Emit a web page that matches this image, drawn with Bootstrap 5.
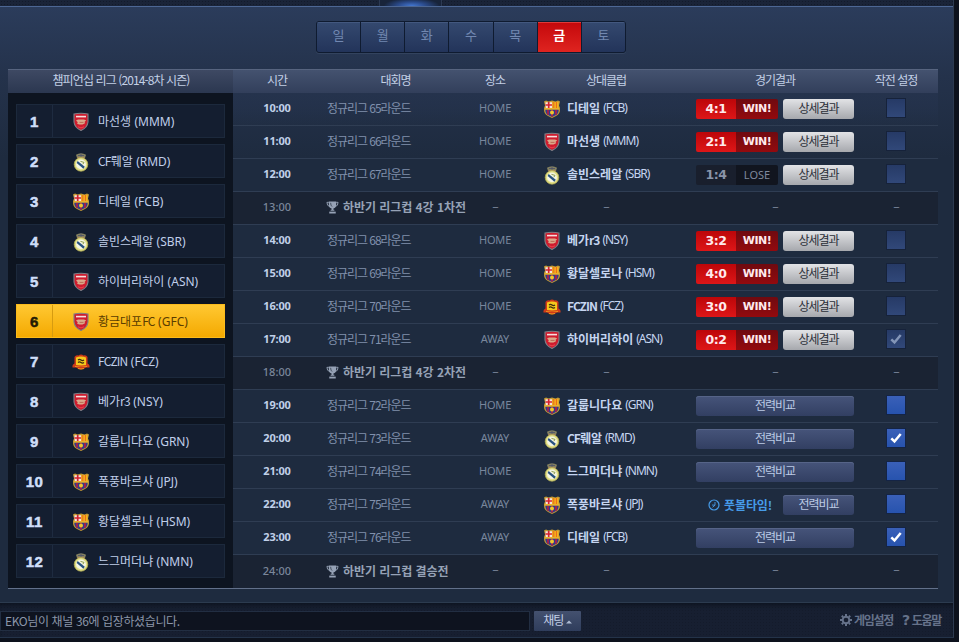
<!DOCTYPE html>
<html lang="ko">
<head>
<meta charset="utf-8">
<meta name="viewport" content="width=device-width, initial-scale=1">
<title>경기 일정</title>
<link href="https://cdn.jsdelivr.net/npm/bootstrap@5.3.0/dist/css/bootstrap.min.css" rel="stylesheet">
<style>
body{font-family:"Noto Sans CJK KR",sans-serif;font-size:12px;line-height:16px;letter-spacing:-1px;color:#b9c9e4;background:#0d121d;height:642px;overflow:hidden}
.en{font-family:"Noto Sans","Noto Sans CJK KR",sans-serif}
.lat{letter-spacing:-.8px}
.shell{width:954px;height:638px;border-right:1px solid #2c3a50;border-bottom:1px solid #243349}
.topstrip{height:7px;border-bottom:1px solid #4d6794;background:#1a2438 radial-gradient(#131b2b 35%,transparent 40%) 0 0/3px 3px}
.glow{width:63px;height:6px;margin-left:379px;border:solid #2c3a53;border-width:0 1px;background:radial-gradient(ellipse 28px 8px at 52% 100%,#4478d2,#2a4a8a 50%,#18243a)}
.board{height:596px;background:linear-gradient(#2b3c5b,#24324b 70px,#1e2b3f 150px);border-bottom:1px solid #2c3b4f;padding:14px 15px 0 8px}
.days{width:310px;height:32px;margin-left:308px;border:1px solid #0f1b30;border-radius:3px;background:#0f1b30;gap:1px;overflow:hidden;box-shadow:0 1px 0 #33435e}
.day{flex:1 1 0;border:0;border-radius:0;padding:0 0 4px;color:#7288b1;font-size:13px;line-height:26px;letter-spacing:0;background:linear-gradient(#34496f,#23345a);box-shadow:inset 0 1px #43587f}
.day.on{color:#fff;font-weight:700;background:linear-gradient(#c4080b,#df2420);box-shadow:inset 0 1px #df3a38}
.sheet{margin-top:16px;width:930px;height:520px;border-bottom:1px solid #62708a}
.bar{height:24px;background:linear-gradient(#44526f,#323f5b);border-top:1px solid #57647f;color:#c3d0e6;padding-bottom:3px}
.side{width:225px;background:#0d1420}
.side .bar{letter-spacing:-.9px;padding-left:1px;background:linear-gradient(#3e4963,#2b3750)}
.ranks{padding:11px 8px 0;gap:6px}
.club{height:34px;background:#141e30;border:1px solid #1c293c;letter-spacing:0;color:#c0cfea}
.club .no{width:36px;height:32px;border-right:1px solid #1e2b40;font:700 15px/33px "Liberation Sans",sans-serif;letter-spacing:.5px;-webkit-text-stroke:.5px currentColor;color:#cfdef8}
.club .crest{margin-left:19px;margin-top:2px}
.club .nm{margin-left:8px;padding-top:1px}
.club.mine{background:linear-gradient(#ffc832,#f4a900);border-color:#fbbb1c;color:#5a3c00}
.club.mine .no{color:#241a04;border-color:#d69b10}
.crest{width:18px;height:20px;flex:none}
.fixtures{width:705px}
.line{display:grid;grid-template-columns:84px 153px 46px 176px 162px 80px;padding-left:2px;align-items:center}
.game{height:33px;border-bottom:1px solid #2f3d53}
.game:last-child{border-bottom:0}
.game:nth-child(2){background:linear-gradient(#25334d,transparent)}
.game.cup{background:#1a2333;color:#8591a6}
.time{font-size:11px;font-weight:700;letter-spacing:-.15px;color:#c0d0e8}
.cup .time{font-weight:500;color:#7b879b;letter-spacing:.05px}
.league{padding-left:8px;color:#8090ac;letter-spacing:-1.05px}
.cup .league{font-weight:700;letter-spacing:-.05px;color:#96a2b6;padding-left:7px}
.place{font-size:11px;letter-spacing:-.15px;color:#78869c}
.rival{padding-left:25px;color:#c5d5f0}
.rival .crest{margin-right:6px;margin-top:1px}
.rival b{letter-spacing:0;margin-right:3px}
.rival .lat{letter-spacing:-1px}
.game>*{margin-bottom:2px}
.game>.dash{margin-bottom:5px}
.game>.res{margin-bottom:0}
.game>.tac{margin-bottom:2px}
.res{padding:0 2px}
.score,.verdict{height:20px;line-height:19px;font-family:"DejaVu Sans",sans-serif;font-weight:700;letter-spacing:-.5px;color:#ffe9ec}
.score{width:40px;font-size:12.500px;background:linear-gradient(#bd0609,#dd1618);border-radius:2px 0 0 2px}
.verdict{width:42px;font-size:11px;background:linear-gradient(#6f0a10,#930a0e);border-radius:0 2px 2px 0}
.lost .score{background:#191f2d;color:#8a94a8}
.lost .verdict{background:#11151f;color:#7f899c;font-family:"Noto Sans",sans-serif;font-weight:400;font-size:11px;letter-spacing:0}
.act{height:20px;line-height:15px;padding:0 0 4px;border:0;border-radius:3px;font-size:12px;letter-spacing:-1px;color:#bccbe6;background:linear-gradient(#46547a,#323f62);box-shadow:inset 0 1px #566488}
.act.half{width:71px}
.act.done{color:#2b2f38;background:linear-gradient(#e2e3e6,#a6a8ad);box-shadow:none}
.live{color:#469be8;font-weight:700;letter-spacing:-.1px}
.tick{width:20px;height:20px;border:1px solid #16223a;background:linear-gradient(#263a66,#314879);color:#8496b8}
.tick.open{background:linear-gradient(#3a60b8,#2753ae);border-color:#142445;color:#fff}
.foot{height:34px;background:#171f31 radial-gradient(#141b2b 30%,transparent 45%) 0 0/3px 3px;box-shadow:inset 0 4px 4px -2px #0d131f}
.msg{width:530px;height:20px;margin-top:2px;background:#0e131f;border:1px solid #222e42;color:#8c96a9;padding:0 4px;line-height:17px;letter-spacing:-.38px}
.chat{width:47px;height:20px;margin:2px 0 0 4px;border:0;border-radius:1px;padding:0 0 2px;line-height:16px;font-size:12px;letter-spacing:-1px;color:#c3cfe8;background:linear-gradient(#44516f,#2f3d5c)}
.tools{color:#66728a;font-weight:700;letter-spacing:-1.3px;font-size:12px;margin-right:12px}
.tool-a{margin-right:9px;margin-left:-2px}
.tool-q{font:700 14px/16px "DejaVu Sans",sans-serif;margin-right:3px}
</style>
<script src="https://cdn.jsdelivr.net/npm/bootstrap@5.3.0/dist/js/bootstrap.bundle.min.js"></script>
</head>
<body>
<svg width="0" height="0" class="d-none">
  <symbol id="ars" viewBox="0 0 18 20"><path d="M2 2Q9 .5 16 2V10Q15.500 15.500 9 18.500Q2.500 15.500 2 10Z" fill="#cf1c2e" stroke="#7d8188" stroke-width="1.100"/><path d="M4 4.600h10" stroke="#f7dede" stroke-width="1.600"/><path d="M4 8.500l2-1h6l2.200 1-1.600 1.200.4 1.500-2.500 1.300H7L5 11.500l.8-1.200z" fill="#dba98a"/><path d="M7.500 10.400h4" stroke="#b55a48" stroke-width=".8"/><path d="M6 14.800q3 2.200 6 0" stroke="#ea4450" fill="none"/></symbol>
  <symbol id="rma" viewBox="0 0 18 20"><path d="M5 6L4 2.800Q9-.5 14 2.800L13 6Z" fill="#858260"/><path d="M6 3.500h6M9 1.200v3.500" stroke="#50556a" stroke-width=".9"/><path d="M5.500 5.600h7" stroke="#b4735a" stroke-width=".9"/><circle cx="9" cy="12.400" r="6.800" fill="#e2df86" stroke="#a9a650" stroke-width=".8"/><circle cx="9" cy="12.400" r="4.900" fill="#f4f5e4"/><path d="M5.600 9l7.200 5.800-1.400 1.900L4.700 11z" fill="#285280"/><path d="M8.500 9.400l3.500 1-1.200 1.800" stroke="#8a9a48" fill="none"/></symbol>
  <symbol id="bar" viewBox="0 0 18 20"><path d="M1 2.500L3 1.500 5.500 2.500 9 1.500 12.500 2.500 15 1.500 17 2.500 16 6.500 17 9Q17.500 15 13 17L9 19 5 17Q.5 15 1 9L2 6.500Z" fill="#c49a34"/><path d="M2.500 3.300H9V9H2.800Z" fill="#f5e3dc"/><path d="M5.700 3v6M2.500 6H9" stroke="#d5222f" stroke-width="1.700"/><path d="M9.300 3h6.200v6H9.300z" fill="#f6b21c"/><path d="M10.800 3v6M13.400 3v6" stroke="#e8661e" stroke-width="1"/><path d="M2 9h14v1.800H2z" fill="#eab12c"/><path d="M2.300 10.800h13.400Q15.600 15 12.500 16.300L9 18 5.500 16.300Q2.400 15 2.300 10.800" fill="#303c8a"/><path d="M5 11v4.800M13 11v4.800M9 11v6.500" stroke="#b01d45" stroke-width="1.700"/><circle cx="9" cy="13.600" r="2" fill="#eec62e"/></symbol>
  <symbol id="fcz" viewBox="0 0 18 20"><path d="M2.500 5Q4 2.500 6.500 3.500Q9 1.300 11.500 3.500Q14 2.500 15.500 5L15.500 11.500Q18 12.500 17.500 15.500L14 15.500Q9 19.500 4 15.500L.5 15.500Q0 12.500 2.500 11.500Z" fill="#cf3a18"/><path d="M4 5.500Q9 3.300 14 5.500V13H4Z" fill="#f5c81c"/><path d="M6 8q1.500-1.200 3 0t3 0M6 10.500q1.500-1.200 3 0t3 0" stroke="#3a2c10" fill="none" stroke-width="1.200"/><path d="M3 14.500Q9 13 15 14.500M6 16.500q3 1 6 0" stroke="#f0a01a" fill="none" stroke-width=".9"/></symbol>
  <symbol id="cup" viewBox="0 0 14 14"><path d="M3 1h8v3q0 4-3 4.500V10h1v1H5v-1h1V8.500Q3 8 3 4Z" fill="currentColor"/><path d="M3 2H1q0 4 3 4.500M11 2h2q0 4-3 4.500" fill="none" stroke="currentColor"/><path d="M3.500 12h7v2h-7z" fill="currentColor"/><path d="M5 2.500q0 3 1.500 4" stroke="#333d4d" fill="none" stroke-width=".9"/></symbol>
  <symbol id="chk" viewBox="0 0 12 12"><path d="M1.300 6.300L4.500 9.500 10.700 2" fill="none" stroke="currentColor" stroke-width="2.500"/></symbol>
  <symbol id="clock" viewBox="0 0 12 12"><circle cx="6" cy="6" r="5" fill="none" stroke="currentColor" stroke-width="1.200"/><path d="M7 3v3.200L4.500 8.300M7 6.200L4 6" fill="none" stroke="currentColor" stroke-width=".9"/></symbol>
  <symbol id="gear" viewBox="0 0 12 12"><circle cx="6" cy="6" r="3.300" fill="none" stroke="currentColor" stroke-width="1.900"/><path d="M6 0v2M6 10v2M0 6h2M10 6h2M1.800 1.800l1.400 1.400M8.800 8.800l1.400 1.400M10.200 1.800L8.800 3.200M3.200 8.800L1.800 10.200" stroke="currentColor" stroke-width="2"/></symbol>
</svg>

<div class="shell">
  <div class="topstrip"><div class="glow"></div></div>
  <main class="board">
    <div class="days d-flex" role="group">
      <button class="btn day">일</button><button class="btn day">월</button><button class="btn day">화</button><button class="btn day">수</button><button class="btn day">목</button><button class="btn day on">금</button><button class="btn day">토</button>
    </div>
    <div class="sheet d-flex">
      <aside class="side">
        <div class="bar d-flex align-items-center justify-content-center">챔피언십 리그 (2014-8차 시즌)</div>
        <div class="ranks d-flex flex-column" id="ranks"></div>
      </aside>
      <section class="fixtures" id="fixtures">
        <div class="bar line text-center"><span>시간</span><span>대회명</span><span>장소</span><span>상대클럽</span><span>경기결과</span><span>작전 설정</span></div>
      </section>
    </div>
  </main>
  <footer class="foot d-flex align-items-center">
    <div class="msg">EKO님이 채널 36에 입장하셨습니다.</div>
    <button class="btn chat">채팅 <svg width="6" height="4"><path d="M0 3.500L3 .5 6 3.500Z" fill="#aebbd3"/></svg></button>
    <div class="tools d-flex align-items-center ms-auto">
      <svg width="12" height="12" class="me-1"><use href="#gear"/></svg><span class="tool-a">게임설정</span>
      <span class="tool-q">?</span><span>도움말</span>
    </div>
  </footer>
</div>

<script>
const clubs = {
  MMM:['마선생','ars'], RMD:['CF뤠알','rma'], FCB:['디테일','bar'], SBR:['솔빈스레알','rma'],
  ASN:['하이버리하이','ars'], GFC:['황금대포FC','ars'], FCZ:['FCZIN','fcz'], NSY:['베가r3','ars'],
  GRN:['갈룹니다요','bar'], JPJ:['폭풍바르샤','bar'], HSM:['황달셀로나','bar'], NMN:['느그머더냐','rma']
};
const icon = (id, cls, w, h) => `<svg class="${cls}" width="${w}" height="${h}"><use href="#${id}"/></svg>`;
// Latin runs inside a club name are set tighter than the Hangul
const tight = name => name.replace(/[A-Za-z0-9]+/g, '<span class="lat">$&</span>');

document.getElementById('ranks').innerHTML = Object.entries(clubs).map(([code, [name, crest]], i) => `
  <div class="club d-flex align-items-center${code === 'GFC' ? ' mine' : ''}">
    <span class="no text-center">${i + 1}</span>${icon(crest, 'crest', 18, 20)}
    <span class="nm text-nowrap">${tight(name)} <span class="en">(${code})</span></span>
  </div>`).join('');

// [round, place, club, score or null, checked, live] ; a string is a cup match
const games = [
  [65,'HOME','FCB','4:1'], [66,'HOME','MMM','2:1'], [67,'HOME','SBR','1:4'], '하반기 리그컵 4강 1차전',
  [68,'HOME','NSY','3:2'], [69,'HOME','HSM','4:0'], [70,'HOME','FCZ','3:0'], [71,'AWAY','ASN','0:2',true],
  '하반기 리그컵 4강 2차전', [72,'HOME','GRN',null], [73,'AWAY','RMD',null,true], [74,'HOME','NMN',null],
  [75,'AWAY','JPJ',null,false,true], [76,'AWAY','FCB',null,true], '하반기 리그컵 결승전'
];
const result = (score, live) => {
  if (score) {
    const lost = score === '1:4';
    return `<div class="d-flex${lost ? ' lost' : ''}"><span class="score text-center">${score}</span><span class="verdict text-center">${lost ? 'LOSE' : 'WIN!'}</span></div>
      <button class="btn act half done">상세결과</button>`;
  }
  if (live) return `<span class="live d-flex align-items-center ms-2 ps-1">${icon('clock', 'me-1', 12, 12)}풋볼타임!</span><button class="btn act half">전력비교</button>`;
  return '<button class="btn act w-100">전력비교</button>';
};
document.getElementById('fixtures').insertAdjacentHTML('beforeend', games.map((g, i) => {
  const time = `<span class="time en text-center">${i + 10}:00</span>`;
  if (typeof g === 'string') return `<div class="game line cup">${time}
    <span class="league text-nowrap d-flex align-items-center">${icon('cup', 'me-1', 13, 14)}<span>${g}</span></span>
    ${'<span class="dash text-center">–</span>'.repeat(4)}</div>`;
  const [round, place, code, score, checked, live] = g, [name, crest] = clubs[code];
  return `<div class="game line">${time}<span class="league">정규리그 ${round}라운드</span>
    <span class="place en text-center">${place}</span>
    <span class="rival d-flex align-items-center text-nowrap">${icon(crest, 'crest', 18, 20)}<b>${tight(name)}</b><span class="en">(${code})</span></span>
    <div class="res d-flex justify-content-between">${result(score, live)}</div>
    <div class="tac d-flex justify-content-center"><span class="tick d-flex align-items-center justify-content-center${score ? '' : ' open'}">${checked ? icon('chk', '', 12, 12) : ''}</span></div></div>`;
}).join(''));
</script>
</body>
</html>
